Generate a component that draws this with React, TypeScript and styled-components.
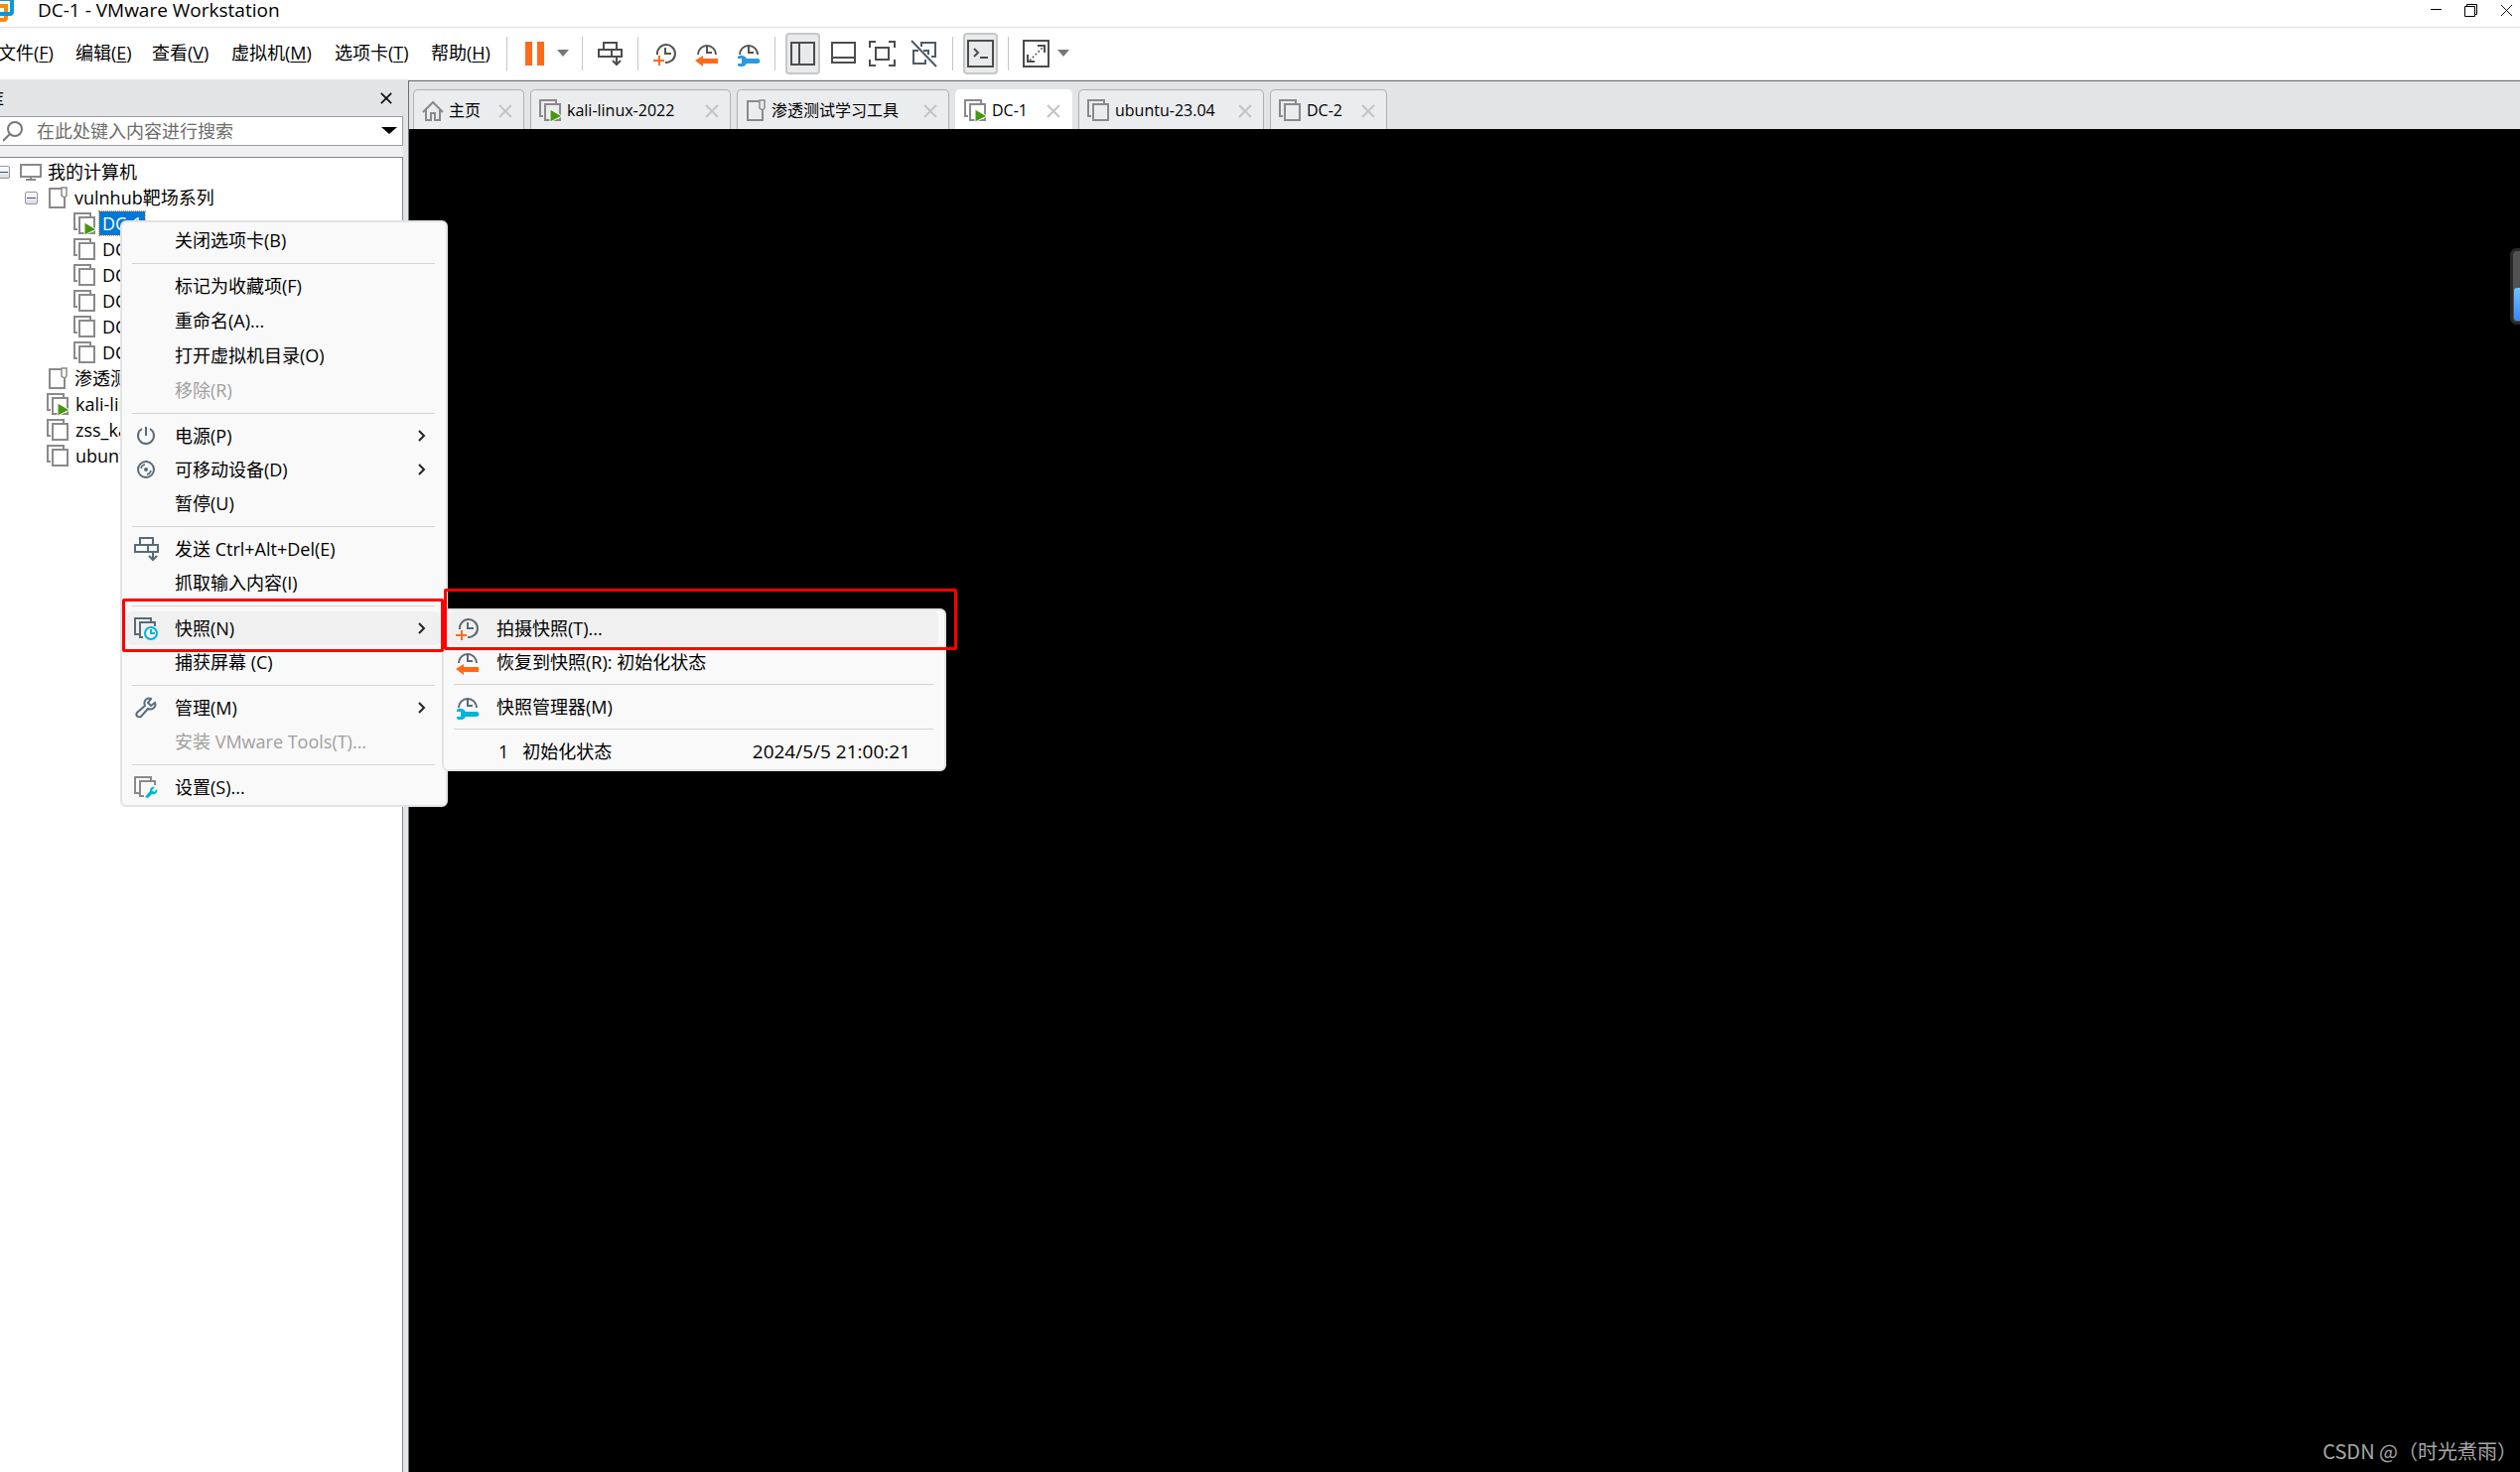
import React from "react";
import styled, { createGlobalStyle, css } from "styled-components";

const Global = createGlobalStyle`
  *, *::before, *::after { box-sizing: border-box; }
  html, body, #root { height: 100%; margin: 0; }
  body {
    overflow: hidden;
    background: #fff;
    color: #000;
    font-family: "Open Sans", "Noto Sans CJK SC", sans-serif;
    font-size: 18px;
  }
  button, input {
    font: inherit;
    color: inherit;
    margin: 0;
    padding: 0;
    border: 0;
    background: none;
    text-align: left;
  }
  svg { display: block; flex: none; }
  u { text-underline-offset: 2px; text-decoration-thickness: 1px; }
`;

const Window = styled.div`
  position: relative;
  display: flex;
  flex-direction: column;
  height: 100vh;
  overflow: hidden;
`;

const TitleBar = styled.header`
  display: flex;
  align-items: flex-start;
  height: 28px;
  flex: none;
  border-bottom: 1px solid #e0e0e0;
`;
const Title = styled.h1`
  flex: 1;
  margin: 0;
  padding-left: 23px;
  font-size: 19px;
  font-weight: 400;
  line-height: 20px;
`;
const WindowButtons = styled.div`
  display: flex;
  gap: 22px;
  padding: 3px 7px 0 0;
`;
const IconButton = styled.button`
  display: flex;
  align-items: center;
  justify-content: center;
`;

const MenuBar = styled.div`
  display: flex;
  align-items: center;
  flex: none;
  height: 52px;
`;
const MenuNames = styled.nav`
  display: flex;
  margin-left: -2px;
  padding-bottom: 2px;
`;
const MenuName = styled.button<{ $width: number }>`
  width: ${(p) => p.$width}px;
  line-height: 24px;
  white-space: nowrap;
`;
const Toolbar = styled.div`
  display: flex;
  align-items: center;
`;
const ToolGroup = styled.div<{ $left: number; $right: number; $gap: number }>`
  display: flex;
  align-items: center;
  gap: ${(p) => p.$gap}px;
  height: 34px;
  padding: 0 ${(p) => p.$right}px 0 ${(p) => p.$left}px;
  border-left: 1px solid #c6c6c6;
`;
const Tool = styled.button<{ $on?: boolean; $wide?: boolean }>`
  display: flex;
  align-items: center;
  justify-content: center;
  height: 42px;
  ${(p) => p.$wide && "width: 31px;"}
  ${(p) =>
    p.$on &&
    css`
      width: 35px;
      border: 2px solid #c8c8c8;
      border-radius: 4px;
      background: #e9eaeb;
    `}
`;

const Body = styled.div`
  display: flex;
  flex: 1;
  min-height: 0;
  background: #e3e4e6;
`;
const Sidebar = styled.aside`
  display: flex;
  flex-direction: column;
  flex: none;
  width: 411px;
  padding-right: 5px;
`;
const SideHeader = styled.div`
  display: flex;
  align-items: center;
  justify-content: space-between;
  height: 37px;
  padding-right: 11px;
`;
const SideTitle = styled.span`
  margin-left: -14px;
`;
const SearchBox = styled.label`
  display: flex;
  align-items: center;
  height: 30px;
  padding: 0 5px 0 3px;
  border: 1px solid #9a9da1;
  border-width: 1px 1px 1px 0;
  background: #fff;
`;
const SearchInput = styled.input`
  flex: 1;
  min-width: 0;
  margin-left: 14px;
  outline: none;
  &::placeholder { color: #6d6d6d; opacity: 1; }
`;
const Tree = styled.ul`
  flex: 1;
  margin: 0;
  padding: 1px 0 0;
  list-style: none;
  border: 1px solid #82878f;
  border-width: 1px 1px 0 0;
  background: #fff;
`;
const TreeGap = styled.div`
  height: 11px;
  background: #f0f0f0;
`;
const Branch = styled.ul`
  margin: 0;
  padding: 0;
  list-style: none;
`;
const TreeRow = styled.div<{ $indent: number }>`
  display: flex;
  align-items: center;
  gap: 3px;
  height: 26px;
  padding-left: ${(p) => p.$indent}px;
  line-height: 24px;
  white-space: nowrap;
`;
const Toggle = styled.button`
  display: flex;
  align-items: center;
  justify-content: center;
  width: 13px;
  height: 13px;
  margin: 0 7px 0 -23px;
  border: 1px solid #969696;
  border-radius: 2px;
  background: linear-gradient(#fff, #dcdcdc);
  &::after { content: ""; width: 9px; height: 1px; background: #3a55a8; }
`;
const TreeLabel = styled.span<{ $selected?: boolean }>`
  padding: 0 3px;
  ${(p) =>
    p.$selected &&
    css`
      color: #fff;
      background: #0078d7;
      outline: 1px dotted #ff8728;
    `}
`;

const Main = styled.main`
  display: flex;
  flex-direction: column;
  flex: 1;
  min-width: 0;
  margin-top: 1px;
  border: 1px solid #6d7073;
  border-width: 1px 0 0 1px;
`;
const TabStrip = styled.div`
  display: flex;
  align-items: flex-end;
  gap: 6px;
  height: 48px;
  padding-left: 4px;
`;
const Tab = styled.div<{ $width: number; $active?: boolean }>`
  display: flex;
  align-items: center;
  width: ${(p) => p.$width}px;
  height: 40px;
  padding: 2px 11px 0 8px;
  border: 1px solid ${(p) => (p.$active ? "#fff" : "#aeb0b2")};
  border-bottom: 0;
  border-radius: 5px 5px 0 0;
  background: ${(p) => (p.$active ? "#fff" : "#ebecee")};
`;
const TabName = styled.button`
  display: flex;
  align-items: center;
  flex: 1;
  gap: 5px;
`;
const TabText = styled.span`
  padding-bottom: 2px;
  font-size: 16px;
  line-height: 22px;
  white-space: nowrap;
`;
const Screen = styled.section`
  position: relative;
  flex: 1;
  background: #000;
`;
const Watermark = styled.p`
  position: absolute;
  right: 3px;
  bottom: 7px;
  margin: 0;
  color: #a6a6a6;
  font-family: "Noto Sans CJK SC", sans-serif;
  font-size: 20px;
  line-height: 28px;
`;
const Gauge = styled.div`
  position: absolute;
  top: 120px;
  right: -6px;
  display: flex;
  align-items: flex-end;
  width: 16px;
  height: 77px;
  padding: 1px;
  border: 3px solid #2a2a2a;
  border-radius: 7px;
  background: #525252;
  &::after {
    content: "";
    width: 100%;
    height: 33px;
    border-radius: 3px;
    background: linear-gradient(#6ec3ff, #3a86ff);
  }
`;

const Popup = styled.div<{ $left: number; $top: number; $width: number }>`
  position: absolute;
  left: ${(p) => p.$left}px;
  top: ${(p) => p.$top}px;
  width: ${(p) => p.$width}px;
  padding: 1px 6px 1px 5px;
  border: 2px solid #e2e3e4;
  border-radius: 6px;
  background: #f9f9f9;
`;
const PopupGroup = styled.div<{ $loose?: boolean }>`
  display: flex;
  flex-direction: column;
  gap: ${(p) => (p.$loose ? 1 : 0)}px;
`;
const Rule = styled.hr<{ $tight?: boolean }>`
  height: 1px;
  margin: ${(p) => (p.$tight ? 5 : 6)}px 5px 5px;
  border: 0;
  background: #d4d4d4;
`;
const Item = styled.button<{ $hot?: boolean }>`
  display: flex;
  align-items: center;
  height: 34px;
  padding: 0 14px 0 6px;
  border-radius: 5px;
  line-height: 24px;
  white-space: nowrap;
  background: ${(p) => (p.$hot ? "#f0f0f0" : "none")};
  &:disabled { color: #a0a0a0; }
`;
const ItemIcon = styled.span`
  display: flex;
  align-items: center;
  justify-content: center;
  width: 26px;
  margin-right: 16px;
`;
const ItemText = styled.span`
  flex: 1;
`;
const SnapshotName = styled.span`
  flex: 1;
  padding: 0 0 0 14px;
`;
const SnapshotIndex = styled.span`
  padding-left: 2px;
`;
const SnapshotDate = styled.time`
  padding-right: 14px;
  font-size: 19px;
`;
const Highlight = styled.div<{ $left: number; $top: number; $width: number; $height: number }>`
  position: absolute;
  left: ${(p) => p.$left}px;
  top: ${(p) => p.$top}px;
  width: ${(p) => p.$width}px;
  height: ${(p) => p.$height}px;
  border: 3px solid #f00;
  border-radius: 2px;
  pointer-events: none;
`;

/* Icons */
const Logo = () => (
  <svg width="15" height="24" viewBox="9 0 15 24" fill="none" strokeWidth="4">
    <rect x="1" y="6" width="14" height="14" rx="2" stroke="#f68b0c" />
    <rect x="6" y="-1" width="15" height="15" rx="2" stroke="#fff" strokeWidth="6" />
    <path d="M9 6h6v12" stroke="#f68b0c" />
    <rect x="6" y="-1" width="15" height="15" rx="2" stroke="#1296d4" />
  </svg>
);
const Caret = ({ w = 12, fill = "#777" }: { w?: number; fill?: string }) => (
  <svg width={w} height="8" viewBox="0 0 12 8" fill={fill} preserveAspectRatio="none">
    <path d="M0 0h12L6 7z" />
  </svg>
);
const Cross = ({ size = 14, color = "#c4c4c4", w = 2 }: { size?: number; color?: string; w?: number }) => (
  <svg width={size} height={size} viewBox="0 0 14 14" stroke={color} strokeWidth={w}>
    <path d="M1 1l12 12M13 1L1 13" />
  </svg>
);
const Pause = () => (
  <svg width="20" height="26" viewBox="0 0 20 26" fill="#ff6a1a">
    <path d="M0 1h7v24H0zM12 1h7v24h-7z" />
  </svg>
);
const SendKeys = ({ color = "#4d4d4d" }: { color?: string }) => (
  <svg width="25" height="26" viewBox="0 0 25 26" fill="none" stroke={color} strokeWidth="2">
    <path d="M6 9V2h13v7M1 9h23v7H1zM14 9v7M19 16v8M15 20l4 4 4-4" />
  </svg>
);
const Dial = ({ color }: { color: string }) => (
  <g fill="none" stroke={color} strokeWidth="2">
    <path d="M3 14A9 9 0 1 1 21 14" />
    <path d="M12 6v6h5" />
  </g>
);
const ClockPlus = ({ color = "#555" }: { color?: string }) => (
  <svg width="24" height="26" viewBox="0 0 24 26" fill="none" strokeWidth="2">
    <path d="M4 14A9 9 0 1 1 12 22" stroke={color} />
    <path d="M12 7v6h6" stroke={color} />
    <path d="M0 20h11M6 15v10" stroke="#ff6a1a" />
  </svg>
);
const ClockBack = ({ color = "#555" }: { color?: string }) => (
  <svg width="24" height="26" viewBox="0 0 24 26">
    <Dial color={color} />
    <path d="M0 20l8-5v3h15v5H8v3z" fill="#ff6a1a" />
  </svg>
);
const ClockWrench = ({ color = "#555", accent = "#2b9ade" }: { color?: string; accent?: string }) => (
  <svg width="24" height="26" viewBox="0 0 24 26">
    <Dial color={color} />
    <path d="M1 16a6 6 0 0 1 9 2h11a2 2 0 0 1 0 5H10a6 6 0 0 1-9 2v-2h4v-5H1z" fill={accent} />
  </svg>
);
const PaneLeft = () => (
  <svg width="25" height="26" viewBox="0 0 25 26" fill="none" stroke="#4d4d4d" strokeWidth="2">
    <path d="M1 2h23v22H1zM9 2v22" />
  </svg>
);
const PaneBottom = () => (
  <svg width="25" height="26" viewBox="0 0 25 26" fill="none" stroke="#4d4d4d" strokeWidth="2">
    <path d="M1 2h23v20H1zM1 17h23" />
  </svg>
);
const FullScreen = () => (
  <svg width="27" height="28" viewBox="0 0 27 28" fill="none" stroke="#4d4d4d" strokeWidth="2">
    <path d="M1 8V2h6M20 2h6v6M26 20v6h-6M7 26H1v-6M7 8h13v12H7z" />
  </svg>
);
const Unity = () => (
  <svg width="27" height="28" viewBox="0 0 27 28" fill="none" stroke="#4d5b68" strokeWidth="2">
    <path d="M11 7V3h14v14h-4M15 20v4H3V11h5M13 11h5v4M1 1l25 26" />
  </svg>
);
const Console = () => (
  <svg width="27" height="28" viewBox="0 0 27 28" fill="none" stroke="#4d4d4d" strokeWidth="2">
    <path d="M1 1h25v26H1zM7 9l4 4-4 4M13 18h8" />
  </svg>
);
const Stretch = () => (
  <svg width="27" height="28" viewBox="0 0 27 28" fill="none" stroke="#4d4d4d" strokeWidth="2">
    <path d="M1 1h25v26H1z" />
    <path d="M15 6h7v7M5 15v7h7" />
    <path d="M7 21L21 7" strokeDasharray="2 2" strokeWidth="1.5" />
  </svg>
);
const Machine = ({ on }: { on?: boolean }) => (
  <svg width="23" height="23" viewBox="0 0 23 23" fill="none" stroke="#8a8a8a" strokeWidth="2">
    <path d="M4 17H1V1h16v3" />
    <path d="M6 5h15v16H6z" />
    {on && <path d="M11 10l12 7-12 6z" fill="#47970f" stroke="#fff" strokeWidth="1" />}
  </svg>
);
const Folder = () => (
  <svg width="21" height="23" viewBox="0 0 21 23" fill="none" stroke="#8a8a8a" strokeWidth="2">
    <path d="M14 2H2v19h15V10" />
    <path d="M14 1h5v8l-2 2-3-2z" strokeWidth="1.5" />
  </svg>
);
const Monitor = () => (
  <svg width="22" height="20" viewBox="0 0 22 20" fill="none" stroke="#8a8a8a" strokeWidth="2">
    <path d="M1 3h20v12H1zM11 15v3M6 18h10" />
  </svg>
);
const Home = () => (
  <svg width="22" height="22" viewBox="0 0 22 22" fill="none" stroke="#8a8a8a" strokeWidth="2">
    <path d="M1 12L11 2l10 10M4 10v10h5v-7h4v7h5V10" />
  </svg>
);
const Magnifier = () => (
  <svg width="20" height="21" viewBox="0 0 20 21" fill="none" stroke="#777" strokeWidth="2">
    <circle cx="12" cy="8" r="7" />
    <path d="M7 13l-7 7" />
  </svg>
);
const Power = () => (
  <svg width="20" height="20" viewBox="0 0 20 20" fill="none" stroke="#5a6a78" strokeWidth="2">
    <path d="M6 3a8 8 0 1 0 8 0M10 1v9" />
  </svg>
);
const Disc = () => (
  <svg width="20" height="20" viewBox="0 0 20 20" fill="none" stroke="#5a6a78" strokeWidth="2">
    <circle cx="10" cy="10" r="8" />
    <circle cx="10" cy="10" r="1" />
    <path d="M5 9a5 5 0 0 1 4-4M15 11a5 5 0 0 1-4 4" strokeWidth="1.5" />
  </svg>
);
const Wrench = () => (
  <svg width="22" height="22" viewBox="0 0 22 22" fill="none" stroke="#5a6a78" strokeWidth="2">
    <path d="M16 2c-4-2-8 2-6 7l-8 7c-2 3 1 5 4 4l7-8c4 2 9-2 7-6l-4 3-3-3z" />
  </svg>
);
const MachineClock = () => (
  <svg width="24" height="24" viewBox="0 0 24 24" fill="none" stroke="#5a6a78" strokeWidth="2">
    <path d="M5 18H1V2h16v3M9 21H6V6h15v4" />
    <circle cx="17" cy="17" r="6" stroke="#00b4d8" />
    <path d="M17 13v4h4" stroke="#00b4d8" />
  </svg>
);
const MachineWrench = () => (
  <svg width="24" height="24" viewBox="0 0 24 24" fill="none" stroke="#8a8a8a" strokeWidth="2">
    <path d="M5 18H1V2h16v3M10 21H6V6h15v4" />
    <path d="M21 12l-3 3 2 2 3-3c1 4-2 6-5 5l-4 4-3-1 5-6c0-3 2-5 5-4z" fill="#00b4d8" stroke="none" />
  </svg>
);
const Chevron = () => (
  <svg width="8" height="14" viewBox="0 0 8 14" fill="none" stroke="#222" strokeWidth="2">
    <path d="M1 2l5 5-5 5" />
  </svg>
);

const slate = "#5a6a78";

const menus: [string, string, number][] = [
  ["文件", "F", 78],
  ["编辑", "E", 77],
  ["查看", "V", 80],
  ["虚拟机", "M", 104],
  ["选项卡", "T", 97],
  ["帮助", "H", 76],
];

const tabs = [
  { name: "主页", width: 112, icon: <Home /> },
  { name: "kali-linux-2022", width: 202, icon: <Machine on /> },
  { name: "渗透测试学习工具", width: 214, icon: <Folder /> },
  { name: "DC-1", width: 118, icon: <Machine on />, active: true },
  { name: "ubuntu-23.04", width: 187, icon: <Machine /> },
  { name: "DC-2", width: 118, icon: <Machine /> },
];

type Entry = { text: string; icon?: React.ReactNode; more?: boolean; off?: boolean; hot?: boolean };

const groups: Entry[][] = [
  [{ text: "关闭选项卡(B)" }],
  [
    { text: "标记为收藏项(F)" },
    { text: "重命名(A)..." },
    { text: "打开虚拟机目录(O)" },
    { text: "移除(R)", off: true },
  ],
  [
    { text: "电源(P)", icon: <Power />, more: true },
    { text: "可移动设备(D)", icon: <Disc />, more: true },
    { text: "暂停(U)" },
  ],
  [{ text: "发送 Ctrl+Alt+Del(E)", icon: <SendKeys color={slate} /> }, { text: "抓取输入内容(I)" }],
  [{ text: "快照(N)", icon: <MachineClock />, more: true, hot: true }, { text: "捕获屏幕 (C)" }],
  [{ text: "管理(M)", icon: <Wrench />, more: true }, { text: "安装 VMware Tools(T)...", off: true }],
  [{ text: "设置(S)...", icon: <MachineWrench /> }],
];

const snapshotGroups: Entry[][] = [
  [
    { text: "拍摄快照(T)...", icon: <ClockPlus color={slate} />, hot: true },
    { text: "恢复到快照(R): 初始化状态", icon: <ClockBack color={slate} /> },
  ],
  [{ text: "快照管理器(M)", icon: <ClockWrench color={slate} accent="#00b4d8" /> }],
];

const MenuEntry = ({ text, icon, more, off, hot }: Entry) => (
  <Item role="menuitem" disabled={off} $hot={hot}>
    <ItemIcon>{icon}</ItemIcon>
    <ItemText>{text}</ItemText>
    {more && <Chevron />}
  </Item>
);

const Node = ({
  indent,
  icon,
  label,
  open,
  selected,
  children,
}: {
  indent: number;
  icon: React.ReactNode;
  label: string;
  open?: boolean;
  selected?: boolean;
  children?: React.ReactNode;
}) => (
  <li>
    <TreeRow $indent={indent}>
      {open && <Toggle aria-label="折叠" />}
      {icon}
      <TreeLabel $selected={selected}>{label}</TreeLabel>
    </TreeRow>
    {children && <Branch>{children}</Branch>}
  </li>
);

export default function App() {
  return (
    <>
      <Global />
      <Window>
        <TitleBar>
          <Logo />
          <Title>DC-1 - VMware Workstation</Title>
          <WindowButtons>
            <IconButton aria-label="最小化">
              <svg width="13" height="14" viewBox="0 0 13 14" stroke="#000">
                <path d="M1 6.500h11" />
              </svg>
            </IconButton>
            <IconButton aria-label="还原">
              <svg width="14" height="14" viewBox="0 0 14 14" fill="none" stroke="#000">
                <path d="M.5 3.500h10v10H.5zM2.500 3V1.500h10v10H11" />
              </svg>
            </IconButton>
            <IconButton aria-label="关闭">
              <Cross size={13} color="#000" w={1} />
            </IconButton>
          </WindowButtons>
        </TitleBar>

        <MenuBar>
          <MenuNames>
            {menus.map(([name, key, width]) => (
              <MenuName key={name} $width={width}>
                {name}(<u>{key}</u>)
              </MenuName>
            ))}
          </MenuNames>
          <Toolbar role="toolbar">
            <ToolGroup $left={18} $right={13} $gap={12}>
              <Tool aria-label="挂起"><Pause /></Tool>
              <Tool aria-label="电源选项"><Caret /></Tool>
            </ToolGroup>
            <ToolGroup $left={15} $right={15} $gap={0}>
              <Tool aria-label="发送 Ctrl+Alt+Del"><SendKeys /></Tool>
            </ToolGroup>
            <ToolGroup $left={15} $right={14} $gap={18}>
              <Tool aria-label="拍摄快照"><ClockPlus /></Tool>
              <Tool aria-label="恢复快照"><ClockBack /></Tool>
              <Tool aria-label="管理快照"><ClockWrench /></Tool>
            </ToolGroup>
            <ToolGroup $left={10} $right={13} $gap={11}>
              <Tool $on aria-label="库"><PaneLeft /></Tool>
              <Tool aria-label="缩略图"><PaneBottom /></Tool>
              <Tool $wide aria-label="全屏"><FullScreen /></Tool>
              <Tool $wide aria-label="Unity"><Unity /></Tool>
            </ToolGroup>
            <ToolGroup $left={10} $right={10} $gap={0}>
              <Tool $on aria-label="控制台"><Console /></Tool>
            </ToolGroup>
            <ToolGroup $left={14} $right={0} $gap={8}>
              <Tool aria-label="拉伸"><Stretch /></Tool>
              <Tool aria-label="拉伸选项"><Caret /></Tool>
            </ToolGroup>
          </Toolbar>
        </MenuBar>

        <Body>
          <Sidebar>
            <SideHeader>
              <SideTitle>库</SideTitle>
              <IconButton aria-label="关闭库">
                <Cross size={12} color="#111" w={2} />
              </IconButton>
            </SideHeader>
            <SearchBox>
              <Magnifier />
              <SearchInput placeholder="在此处键入内容进行搜索" aria-label="搜索" />
              <IconButton aria-label="搜索选项">
                <Caret w={16} fill="#000" />
              </IconButton>
            </SearchBox>
            <TreeGap />
            <Tree>
              <Node indent={20} icon={<Monitor />} label="我的计算机" open>
                <Node indent={48} icon={<Folder />} label="vulnhub靶场系列" open>
                  <Node indent={74} icon={<Machine on />} label="DC-1" selected />
                  {["DC-2", "DC-3", "DC-4", "DC-5", "DC-6"].map((n) => (
                    <Node key={n} indent={74} icon={<Machine />} label={n} />
                  ))}
                </Node>
                <Node indent={48} icon={<Folder />} label="渗透测试学习工具" />
                <Node indent={47} icon={<Machine on />} label="kali-linux-2022" />
                <Node indent={47} icon={<Machine />} label="zss_kali" />
                <Node indent={47} icon={<Machine />} label="ubuntu-23.04" />
              </Node>
            </Tree>
          </Sidebar>

          <Main>
            <TabStrip>
              {tabs.map((t) => (
                <Tab key={t.name} $width={t.width} $active={t.active}>
                  <TabName>
                    {t.icon}
                    <TabText>{t.name}</TabText>
                  </TabName>
                  <IconButton aria-label={`关闭 ${t.name}`}>
                    <Cross />
                  </IconButton>
                </Tab>
              ))}
            </TabStrip>
            <Screen>
              <Gauge />
              <Watermark>CSDN @（时光煮雨）</Watermark>
            </Screen>
          </Main>
        </Body>

        <Popup role="menu" $left={121} $top={222} $width={330}>
          {groups.map((g, i) => (
            <React.Fragment key={i}>
              {i > 0 && <Rule />}
              <PopupGroup $loose={i === 1}>
                {g.map((e) => (
                  <MenuEntry key={e.text} {...e} />
                ))}
              </PopupGroup>
            </React.Fragment>
          ))}
        </Popup>

        <Popup role="menu" $left={445} $top={613} $width={508}>
          {snapshotGroups.map((g, i) => (
            <React.Fragment key={i}>
              {i > 0 && <Rule $tight />}
              <PopupGroup>
                {g.map((e) => (
                  <MenuEntry key={e.text} {...e} />
                ))}
              </PopupGroup>
            </React.Fragment>
          ))}
          <Rule $tight />
          <PopupGroup>
            <Item role="menuitem">
              <ItemIcon />
              <SnapshotIndex>1</SnapshotIndex>
              <SnapshotName>初始化状态</SnapshotName>
              <SnapshotDate>2024/5/5 21:00:21</SnapshotDate>
            </Item>
          </PopupGroup>
        </Popup>

        <Highlight $left={123} $top={603} $width={324} $height={54} />
        <Highlight $left={447} $top={593} $width={517} $height={62} />
      </Window>
    </>
  );
}
